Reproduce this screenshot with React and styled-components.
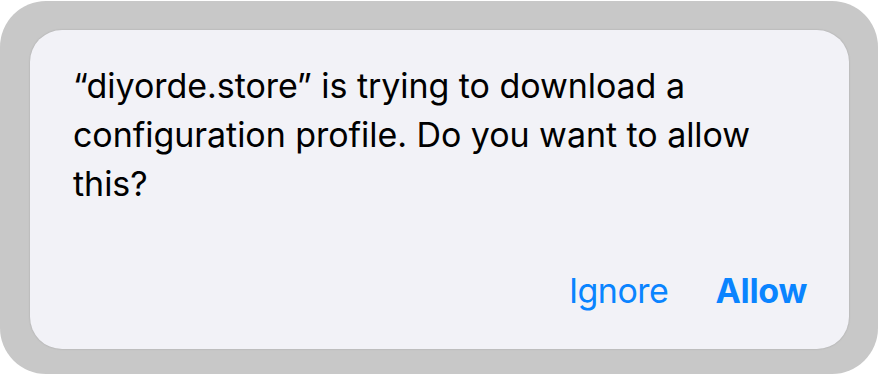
import React from 'react';
import styled, { createGlobalStyle } from 'styled-components';

const GlobalStyle = createGlobalStyle`
  html, body {
    margin: 0;
    padding: 0;
    background: #ffffff;
  }
  body {
    font-family: Inter, "Noto Sans", "Liberation Sans", sans-serif;
    -webkit-font-smoothing: antialiased;
  }
`;

const Frame = styled.div`
  box-sizing: border-box;
  width: 878px;
  height: 373px;
  margin-top: 1px;
  padding: 29px 29px 25px 30px;
  background: #c8c8c8;
  border-radius: 46px;
  display: flex;
`;

const Card = styled.div`
  flex: 1;
  display: flex;
  flex-direction: column;
  justify-content: space-between;
  background: #f2f2f7;
  border-radius: 32px;
  box-shadow: 0 0 2px rgba(0, 0, 0, 0.18);
  padding: 31px 42px 38px 43px;
`;

const Message = styled.p`
  margin: 0;
  max-width: 720px;
  font-size: 34px;
  line-height: 49px;
  color: #000;
  letter-spacing: -0.05px;
`;

const Actions = styled.div`
  display: flex;
  justify-content: flex-end;
  align-items: center;
  gap: 47px;
`;

const ActionButton = styled.button`
  border: 0;
  background: none;
  padding: 0;
  font-family: inherit;
  font-size: 34px;
  line-height: 40px;
  color: #0a84ff;
  font-weight: ${(p) => (p.$primary ? 700 : 400)};
  letter-spacing: ${(p) => (p.$primary ? '-0.3px' : '-0.5px')};
  cursor: pointer;
`;

export default function App() {
  return (
    <>
      <GlobalStyle />
      <Frame>
        <Card>
          <Message>
            “diyorde.store” is trying to download a configuration profile. Do you want to allow this?
          </Message>
          <Actions>
            <ActionButton>Ignore</ActionButton>
            <ActionButton $primary>Allow</ActionButton>
          </Actions>
        </Card>
      </Frame>
    </>
  );
}
